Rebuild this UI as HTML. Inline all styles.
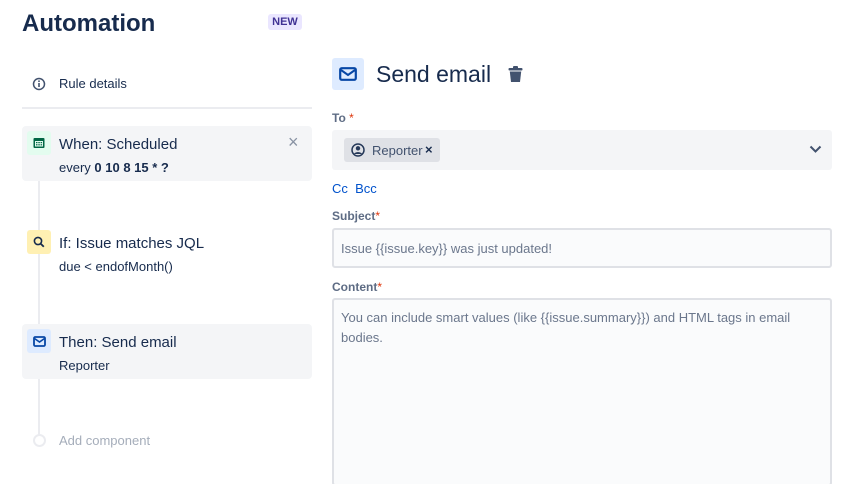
<!DOCTYPE html>
<html><head><meta charset="utf-8"><style>
*{box-sizing:border-box;margin:0;padding:0}
html,body{width:863px;height:484px;overflow:hidden}
body{background:#fff;font-family:"Liberation Sans",sans-serif;color:#172b4d;position:relative}
.a{position:absolute}
.card{position:absolute;left:22px;width:290px;border-radius:4px}
.ic{position:absolute;left:5px;width:24px;height:24px;border-radius:3px;display:flex;align-items:center;justify-content:center}
.t1{position:absolute;left:37px;font-size:15px;white-space:nowrap}
.t2{position:absolute;left:37px;font-size:13px;white-space:nowrap}
.lbl{position:absolute;left:332px;font-size:12px;font-weight:bold;color:#5e6c84}
.lbl span{color:#de350b;font-weight:normal}
</style></head><body>
<div class="a" style="left:22px;top:10px;font-size:24px;font-weight:bold;color:#172b4d">Automation</div>
<div class="a" style="left:268px;top:14px;width:34px;height:16px;background:#eae6ff;border-radius:3px;font-size:11px;font-weight:bold;color:#403294;text-align:center;line-height:16px">NEW</div>

<svg class="a" style="left:32px;top:77px" width="14" height="14" viewBox="0 0 14 14"><circle cx="7" cy="7" r="5.5" fill="none" stroke="#42526e" stroke-width="1.5"/><rect x="6.2" y="6" width="1.6" height="4" fill="#42526e"/><circle cx="7" cy="4.2" r="0.9" fill="#42526e"/></svg>
<div class="a" style="left:59px;top:76px;font-size:13px">Rule details</div>
<div class="a" style="left:22px;top:107px;width:290px;height:2px;background:#ebecf0"></div>

<div class="a" style="left:38px;top:150px;width:2px;height:285px;background:#ebecf0"></div>

<div class="card" style="top:126px;height:55px;background:#f4f5f7">
 <div class="ic" style="top:5px;background:#e3fcef"><svg width="12" height="12" viewBox="0 0 12 12"><rect x="0.5" y="1" width="11" height="10" rx="1" fill="#006644"/><rect x="2" y="4" width="8" height="5.5" fill="#e3fcef"/><g fill="#006644"><rect x="3" y="5" width="1.5" height="1.2"/><rect x="5.3" y="5" width="1.5" height="1.2"/><rect x="7.6" y="5" width="1.5" height="1.2"/><rect x="3" y="7.2" width="1.5" height="1.2"/><rect x="5.3" y="7.2" width="1.5" height="1.2"/><rect x="7.6" y="7.2" width="1.5" height="1.2"/></g></svg></div>
 <div class="t1" style="top:10px">When: Scheduled</div>
 <div class="t2" style="top:34px">every <b>0 10 8 15 * ?</b></div>
 <div class="a" style="left:266px;top:6px;font-size:18px;color:#8993a4">×</div>
</div>

<div class="card" style="top:225px;height:55px">
 <div class="ic" style="top:5px;background:#fff0b3"><svg width="12" height="12" viewBox="0 0 12 12"><circle cx="5" cy="5" r="3.6" fill="none" stroke="#172b4d" stroke-width="1.6"/><path d="M7.6 7.6L10.8 10.8" stroke="#172b4d" stroke-width="1.8"/></svg></div>
 <div class="t1" style="top:10px">If: Issue matches JQL</div>
 <div class="t2" style="top:34px">due &lt; endofMonth()</div>
</div>

<div class="card" style="top:324px;height:55px;background:#f4f5f7">
 <div class="ic" style="top:5px;background:#deebff"><svg width="13" height="11" viewBox="0 0 13 11"><rect x="1" y="1" width="11" height="9" rx="1.2" fill="none" stroke="#0747a6" stroke-width="1.8"/><path d="M1.5 2.5L6.5 6L11.5 2.5" fill="none" stroke="#0747a6" stroke-width="1.6"/></svg></div>
 <div class="t1" style="top:10px">Then: Send email</div>
 <div class="t2" style="top:34px">Reporter</div>
</div>

<div class="a" style="left:33px;top:434px;width:13px;height:13px;border-radius:50%;border:2px solid #ebecf0;background:#fff"></div>
<div class="a" style="left:59px;top:433px;font-size:13px;color:#a5adba">Add component</div>

<div class="a" style="left:332px;top:58px;width:32px;height:32px;background:#deebff;border-radius:3px;display:flex;align-items:center;justify-content:center"><svg width="18" height="14" viewBox="0 0 18 14"><rect x="1.2" y="1.2" width="15.6" height="11.6" rx="1.5" fill="none" stroke="#0747a6" stroke-width="2.2"/><path d="M2 3L9 8L16 3" fill="none" stroke="#0747a6" stroke-width="2"/></svg></div>
<div class="a" style="left:376px;top:61px;font-size:23px;font-weight:500">Send email</div>
<svg class="a" style="left:508px;top:66px" width="15" height="17" viewBox="0 0 15 17"><rect x="0.5" y="2" width="14" height="2.5" rx="1" fill="#42526e"/><rect x="5" y="0" width="5" height="3" rx="1" fill="#42526e"/><path d="M1.8 5.5H13.2L12 16H3Z" fill="#42526e"/></svg>

<div class="lbl" style="top:111px">To <span>*</span></div>
<div class="a" style="left:332px;top:130px;width:500px;height:40px;background:#f4f5f7;border-radius:3px"></div>
<div class="a" style="left:344px;top:138px;width:96px;height:24px;background:#dfe1e6;border-radius:3px"></div>
<svg class="a" style="left:351px;top:143px" width="14" height="14" viewBox="0 0 14 14"><circle cx="7" cy="7" r="6" fill="none" stroke="#253858" stroke-width="1.5"/><circle cx="7" cy="5.3" r="2.2" fill="#253858"/><path d="M3 11C4 8.5 10 8.5 11 11Z" fill="#253858"/></svg>
<div class="a" style="left:372px;top:143px;font-size:13px;color:#42526e">Reporter</div>
<div class="a" style="left:425px;top:143px;font-size:13px;font-weight:bold;color:#172b4d;line-height:14px">×</div>
<svg class="a" style="left:809px;top:145px" width="13" height="9" viewBox="0 0 13 9"><path d="M1.5 1.5L6.5 6.5L11.5 1.5" fill="none" stroke="#42526e" stroke-width="2"/></svg>
<div class="a" style="left:332px;top:181px;font-size:13px;color:#0052cc">Cc&nbsp; Bcc</div>

<div class="lbl" style="top:209px">Subject<span>*</span></div>
<div class="a" style="left:332px;top:228px;width:500px;height:40px;background:#fafbfc;border:2px solid #dfe1e6;border-radius:3px"></div>
<div class="a" style="left:341px;top:241px;font-size:13px;color:#6b778c">Issue {{issue.key}} was just updated!</div>

<div class="lbl" style="top:280px">Content<span>*</span></div>
<div class="a" style="left:332px;top:298px;width:500px;height:188px;background:#fafbfc;border:2px solid #dfe1e6;border-radius:3px"></div>
<div class="a" style="left:341px;top:308px;width:480px;font-size:13px;line-height:20px;color:#6b778c">You can include smart values (like {{issue.summary}}) and HTML tags in email bodies.</div>
</body></html>
